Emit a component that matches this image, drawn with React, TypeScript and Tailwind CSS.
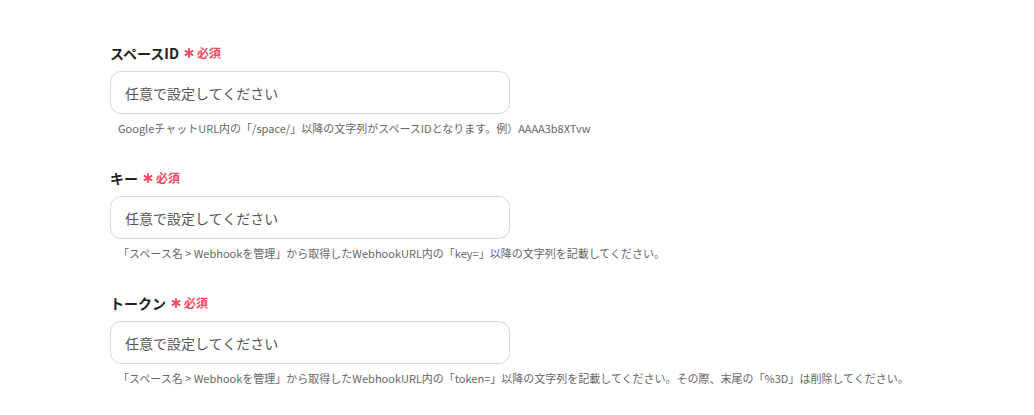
import React from "react";

interface FieldProps {
  label: string;
  help: string;
}

const RequiredMark: React.FC = () => (
  <span className="inline-flex items-center gap-[3px] text-[#f2495e] text-[12px] font-bold leading-none">
    <svg width="10" height="10" viewBox="0 0 10 10" className="shrink-0">
      <g stroke="#f2495e" strokeWidth="1.8" strokeLinecap="round">
        <line x1="5" y1="0.8" x2="5" y2="9.2" />
        <line x1="1.4" y1="2.9" x2="8.6" y2="7.1" />
        <line x1="1.4" y1="7.1" x2="8.6" y2="2.9" />
      </g>
    </svg>
    必須
  </span>
);

const Field: React.FC<FieldProps> = ({ label, help }) => (
  <div className="flex flex-col">
    <div className="flex items-center gap-[5px] h-[20px]">
      <span className="text-[14px] font-bold text-[#222] leading-[20px]">{label}</span>
      <RequiredMark />
    </div>
    <input
      type="text"
      placeholder="任意で設定してください"
      className="mt-2 w-[400px] h-[43px] rounded-[11px] border border-[#d4d7dc] bg-white px-[14px] text-[14px] text-[#333] placeholder:text-[#555] outline-none"
    />
    <p className="mt-[6px] pl-2 text-[11px] leading-[16px] text-[#666] whitespace-nowrap">{help}</p>
  </div>
);

const App: React.FC = () => {
  return (
    <div
      className="w-[1034px] h-[415px] bg-white pt-[43px] pl-[110px] flex flex-col gap-[32px]"
      style={{ fontFamily: '"Noto Sans CJK JP", "Noto Sans", sans-serif' }}
    >
      <Field
        label="スペースID"
        help="GoogleチャットURL内の「/space/」以降の文字列がスペースIDとなります。例）AAAA3b8XTvw"
      />
      <Field
        label="キー"
        help="「スペース名 > Webhookを管理」から取得したWebhookURL内の「key=」以降の文字列を記載してください。"
      />
      <Field
        label="トークン"
        help="「スペース名 > Webhookを管理」から取得したWebhookURL内の「token=」以降の文字列を記載してください。その際、末尾の「%3D」は削除してください。"
      />
    </div>
  );
};

export default App;
